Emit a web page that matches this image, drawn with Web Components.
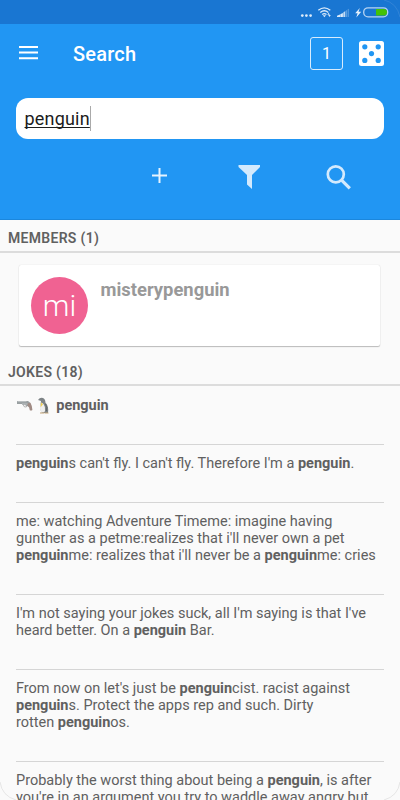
<!DOCTYPE html>
<html lang="en"><head><meta charset="utf-8"><title>Search</title>
<style>
body{margin:0;width:400px;height:800px;overflow:hidden;background:#fafafa;font-family:Roboto,"Noto Sans",sans-serif;color:#606060}
</style></head><body>
<search-screen></search-screen>
<script>
const define=(name,html)=>customElements.define(name,class extends HTMLElement{
  constructor(){super();this.attachShadow({mode:'open'}).innerHTML=html;}
});

define('status-bar',`<style>:host{display:block;height:24px;background:#1976d2}svg{display:block}</style>
<svg width="400" height="24" viewBox="0 0 400 24">
<g fill="#dcebfa"><circle cx="302.300" cy="15.6" r="1.35"/><circle cx="306.400" cy="15.6" r="1.35"/><circle cx="310.600" cy="15.6" r="1.35"/></g>
<g fill="none" stroke="#dcebfa" stroke-width="1.3"><path d="M318.3 10.3q6-5 12 0M320.3 12.4q4-3.3 8 0M322.2 14.4q2.2-1.7 4.3 0"/></g>
<path fill="#dcebfa" d="M322.8 15.2h3.2l-1.6 2zM327.3 14.8l1.3-2 1.3 2zM328.2 15l1.3 2 1.3-2z"/>
<path fill="#dcebfa" d="M337 17v-1.200l3-1.200V17zM340.300 17v-2.700l2.600-1.400V17z"/><path fill="#c0daf4" d="M343.300 17v-4.600l2-1.400V17z"/><path fill="#5c9fe0" d="M345.8 17v-6.2l1.2-.9V17zM347.6 17V9.5l1.2-.8V17z"/>
<path fill="#e8f2fc" d="M359.8 8l-4.600 5.200h2.400l-1.300 4.300 4.900-5.800h-2.700z"/>
<rect x="363.7" y="7.8" width="24" height="9" rx="4.3" fill="none" stroke="#b7d4f3" stroke-width="1.3"/>
<path fill="#43c206" d="M376 9h8.2q2.8.3 2.8 3.3t-2.8 3.3H376z"/>
<path d="M384 0q13 3 16 17" fill="none" stroke="#3c8ad8" stroke-width=".7"/>
</svg>`);

define('app-bar',`<style>:host{display:flex;box-sizing:border-box;height:56px;align-items:center;padding:2px 16px 0;color:#fff}
.menu{margin-left:3px;width:19px;height:14px}
h1{font-size:20px;line-height:24px;font-weight:500;margin:1px auto 0 35px;letter-spacing:.2px}
.count{box-sizing:border-box;width:33px;height:33px;border:1px solid #d8ecfd;border-radius:3px;display:grid;place-items:center;font-size:16px;margin-right:16px}
svg{display:block}</style>
<svg class="menu" viewBox="0 0 19 14" fill="#fff"><path d="M0 0h19v2H0zM0 5.600h19v2H0zM0 11.200h19v2H0z"/></svg>
<h1>Search</h1><div class="count">1</div>
<svg width="25" height="25" viewBox="0 0 25 25"><rect width="25" height="25" rx="2.5" fill="#fff"/><g fill="#2196f3"><circle cx="5.8" cy="5.8" r="2.6"/><circle cx="19.2" cy="5.8" r="2.6"/><circle cx="12.5" cy="12.6" r="2.6"/><circle cx="5.8" cy="19.4" r="2.6"/><circle cx="19.2" cy="19.4" r="2.6"/></g></svg>`);

define('search-field',`<style>:host{display:block;padding:18px 16px 0}
div{box-sizing:border-box;height:41px;background:#fff;border-radius:12px;padding:0 0 0 8.500px;display:flex;align-items:center;color:#1c1c1c;font-size:18px}
span{text-decoration:underline;text-decoration-thickness:1px;text-underline-offset:2px;text-decoration-skip-ink:none;letter-spacing:.2px}
i{width:1px;height:25px;background:#aaa}</style><div><span><slot></slot></span><i></i></div>`);

define('tool-row',`<style>:host{display:flex;padding:25px 47px 0 149px;gap:66px}svg{display:block}svg+svg+svg{margin-left:-2px}</style>
<svg width="22" height="28" viewBox="149 164 22 28"><path d="M152 175.500h15M159.500 168v15" stroke="#e6f3fe" stroke-width="2"/></svg>
<svg width="24" height="28" viewBox="237 164 24 28"><path d="M238.500 165h21.500v2l-8 8v14l-5-4.500V175l-8.500-8z" fill="#d3eafd"/></svg>
<svg width="28" height="28" viewBox="325 164 28 28" fill="none" stroke="#d3eafd"><circle cx="335.800" cy="174.300" r="8" stroke-width="2.700"/><path d="M341.800 180.300l8 8" stroke-width="3.200"/></svg>`);

define('section-title',`<style>:host{display:block;box-sizing:border-box;height:33px;padding:9px 8px 0;border-bottom:2px solid #dcdcdc;font-size:14px;line-height:19px;font-weight:600;color:#606060;letter-spacing:.3px;white-space:nowrap}</style><slot></slot>`);

define('member-card',`<style>:host{display:flex;box-sizing:border-box;height:81px;margin:12px 20px 12px 19px;padding:12px;background:#fff;border-radius:2px;box-shadow:0 1px 1px #bbb,0 0 1px #ccc}
.a{width:57px;height:57px;border-radius:50%;background:#f06292;color:#fff;display:grid;place-items:center;font-size:30px;line-height:57px;font-weight:300}
b{margin-left:12.500px;font-size:18.400px;line-height:26px;font-weight:700;color:#999}</style><div class="a"><slot name="initials"></slot></div><b><slot></slot></b>`);

define('joke-item',`<style>:host{display:block;margin:0 16px;padding:10px 0 30px;border-bottom:1px solid #d5d5d5;font-size:14.5px;line-height:17px;white-space:nowrap}
::slotted(b){font-weight:700}</style><slot></slot>`);

define('pistol-icon',`<style>:host{display:inline-block;width:17px;height:17px;vertical-align:top}svg{display:block}</style>
<svg width="17" height="17" viewBox="0 0 17 17"><path d="M1 4h11l2 1.500-.5 4-3-.5-2-1.200H6V7H1z" fill="#999fa1"/><path d="M1.500 4.600h9M6 7h6" stroke="#bdc2c4"/><path d="M7.500 7.500q0 3.500 3.500 2" fill="none" stroke="#999" stroke-width=".8"/><path d="M11.500 6.500l3-.8q2 3.800 1.900 7.300-1.400 1-2.600.2-.2-3.200-2.300-4.500z" fill="#a08b84"/></svg>`);

define('penguin-icon',`<style>:host{display:inline-block;width:17px;height:17px;vertical-align:top;margin:0 -.5px}svg{display:block}</style>
<svg width="17" height="17" viewBox="0 0 17 17"><path d="M2 3Q4 0 7 1q2.500 1 2.400 4.500Q13 9 12 16H6Q3.500 12 4.700 6.500L5 4z" fill="#7d8386"/><path d="M5.500 5.500Q2.500 11 5.500 15.500q3 .5 3.500-1.500.5-4.500-1.500-7z" fill="#eee"/><path d="M5 5.500l2 1.800-2.300 3z" fill="#f0cf50"/><path d="M9.500 7q2 3.500 1 7" stroke="#5d6468" fill="none"/><path d="M4 16h4M8.500 16h4" stroke="#c3a477"/></svg>`);

define('search-screen',`<style>:host{display:block;position:relative;width:400px;height:800px;overflow:hidden}
header{height:219px;background:#2196f3;border-bottom:1px solid #1b87dd}
.jokes section-title{height:28px;padding-top:5px}
.corner{position:absolute;left:0;bottom:0}</style>
<header><status-bar></status-bar><app-bar></app-bar><search-field>penguin</search-field><tool-row></tool-row></header>
<section><section-title>MEMBERS (1)</section-title>
<member-card><span slot="initials">mi</span>misterypenguin</member-card></section>
<section class="jokes"><section-title>JOKES (18)</section-title>
<joke-item style="padding-top:11px"><pistol-icon></pistol-icon> <penguin-icon></penguin-icon> <b>penguin</b></joke-item>
<joke-item><b>penguin</b>s can't fly. I can't fly. Therefore I'm a <b>penguin</b>.</joke-item>
<joke-item>me: watching Adventure Timeme: imagine having<br>gunther as a petme:realizes that i'll never own a pet<br><b>penguin</b>me: realizes that i'll never be a <b>penguin</b>me: cries</joke-item>
<joke-item>I'm not saying your jokes suck, all I'm saying is that I've<br>heard better. On a <b>penguin</b> Bar.</joke-item>
<joke-item>From now on let's just be <b>penguin</b>cist. racist against<br><b>penguin</b>s. Protect the apps rep and such. Dirty<br>rotten <b>penguin</b>os.</joke-item>
<joke-item>Probably the worst thing about being a <b>penguin</b>, is after<br>you're in an argument you try to waddle away angry but</joke-item></section>
<svg class="corner" width="400" height="20" viewBox="0 0 400 20" fill="none" stroke="#ddd" stroke-width=".7"><path d="M0 2q2 14 16 18M400 2q-2 14-16 18"/></svg>`);
</script></body></html>
